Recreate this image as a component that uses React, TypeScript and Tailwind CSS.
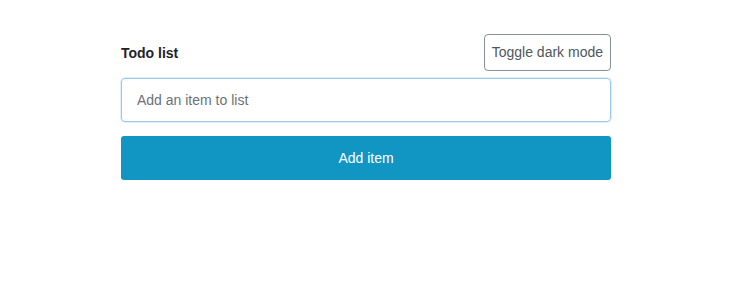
import { useState } from "react";

export default function App() {
  const [items, setItems] = useState<string[]>([]);
  const [text, setText] = useState("");

  function addItem() {
    if (!text.trim()) return;
    setItems((current) => [...current, text.trim()]);
    setText("");
  }

  return (
    <main className="min-h-[296px] bg-white font-['Liberation_Sans',Arial,sans-serif]">
      <section className="mx-auto w-[492px] pl-[2px] pt-[34px]">
        <div className="flex items-center justify-between">
          <h1 className="pt-px text-[14px] font-bold text-[#1f2328]">Todo list</h1>
          <button
            type="button"
            className="h-[37px] rounded-[4px] border border-[#8a8f95] px-[7px] text-[14px] text-[#50565d]"
          >
            Toggle dark mode
          </button>
        </div>
        <input
          className="mt-[7px] h-[44px] w-full rounded-[4px] border border-[#9cc8e6] px-[15px] text-[14px] text-[#333] placeholder:text-[#6b7178] outline-none shadow-[0_0_0_1px_rgba(170,210,240,0.35)]"
          placeholder="Add an item to list"
          value={text}
          onChange={(event) => setText(event.target.value)}
        />
        <button
          type="button"
          onClick={addItem}
          className="mt-[14px] h-[44px] w-full rounded-[3px] bg-[#1195c2] text-[14px] font-medium text-white"
        >
          Add item
        </button>
        {items.length > 0 && (
          <ul className="mt-3 text-[14px] text-[#1f2328]">
            {items.map((item, index) => (
              <li key={index} className="py-1">
                {item}
              </li>
            ))}
          </ul>
        )}
      </section>
    </main>
  );
}
